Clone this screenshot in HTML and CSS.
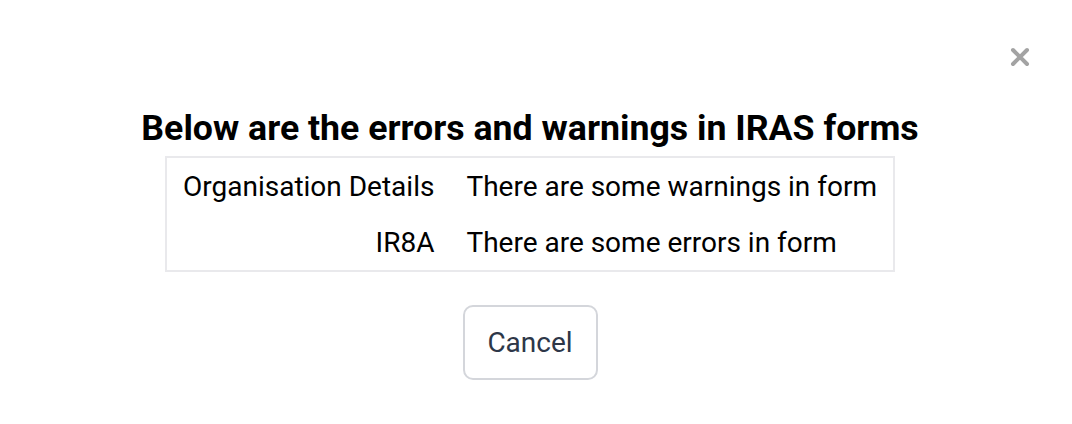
FILE: index.html
```html
<!DOCTYPE html>
<html>
<head>
<meta charset="utf-8">
<link rel="stylesheet" href="styles.css">
</head>
<body>
<div class="modal">
  <button class="close" aria-label="Close">
    <svg width="22" height="22" viewBox="0 0 22 22"><path d="M4 4 L18 18 M18 4 L4 18" stroke="#a3a3a3" stroke-width="4" stroke-linecap="round"/></svg>
  </button>
  <div class="content">
    <h2 class="title">Below are the errors and warnings in IRAS forms</h2>
    <table class="issues">
      <tr><td class="name">Organisation Details</td><td class="msg">There are some warnings in form</td></tr>
      <tr><td class="name">IR8A</td><td class="msg">There are some errors in form</td></tr>
    </table>
    <button class="cancel">Cancel</button>
  </div>
</div>
</body>
</html>
```
FILE: styles.css
```css
html, body { margin: 0; padding: 0; background: #fff; }
body { font-family: Roboto, "Noto Sans", sans-serif; color: #000; }
.modal { position: relative; width: 1072px; height: 424px; box-sizing: border-box; padding: 0 12px 0 0; }
.close { position: absolute; left: 1009px; top: 46px; width: 22px; height: 22px; padding: 0; border: 0; background: none; }
.close svg { display: block; }
.content { display: flex; flex-direction: column; align-items: center; padding-top: 106px; }
.title { margin: 0; font-size: 35.7px; font-weight: 700; line-height: 44px; }
.issues { margin-top: 6px; border: 2px solid #e9e9ec; border-collapse: collapse; font-size: 28px; }
.issues td { padding: 0 16px; height: 56px; }
.issues .name { text-align: right; }
.issues .msg { text-align: left; }
.cancel { margin-top: 33px; width: 135px; height: 75px; border: 2px solid #d4d6db; border-radius: 10px; background: #fff; font-family: Roboto, sans-serif; font-size: 28px; color: #2d3748; }
```
